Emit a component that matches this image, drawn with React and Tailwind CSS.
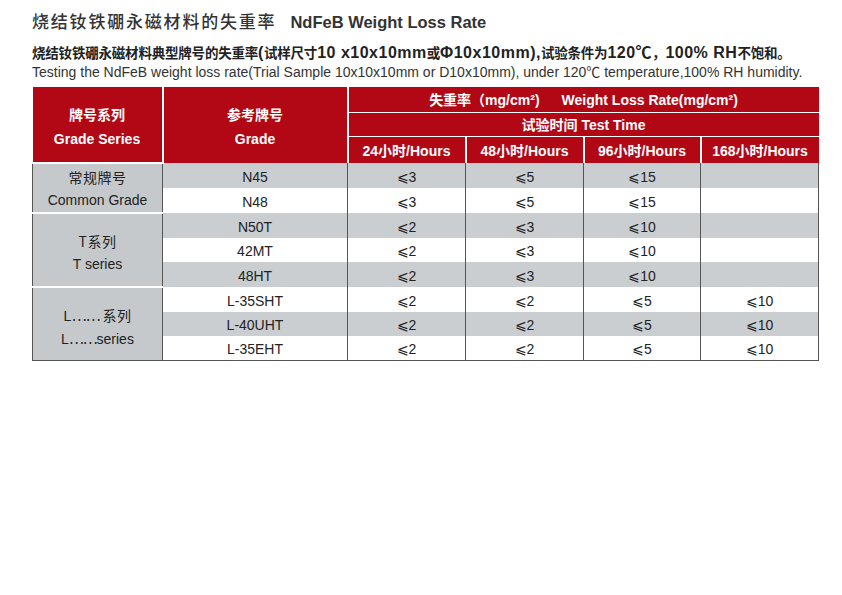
import React from "react";

const FONT = { fontFamily: '"Liberation Sans", Arial, "Noto Sans CJK SC", sans-serif' };
const CJK = { fontFamily: '"Noto Sans CJK SC", sans-serif' };

const rows = [
  { g: "N45", v: ["⩽3", "⩽5", "⩽15", ""], gray: true, h: "h-[25px]" },
  { g: "N48", v: ["⩽3", "⩽5", "⩽15", ""], gray: false, h: "h-[25px]" },
  { g: "N50T", v: ["⩽2", "⩽3", "⩽10", ""], gray: true, h: "h-[25px]" },
  { g: "42MT", v: ["⩽2", "⩽3", "⩽10", ""], gray: false, h: "h-[24px]" },
  { g: "48HT", v: ["⩽2", "⩽3", "⩽10", ""], gray: true, h: "h-[25px]" },
  { g: "L-35SHT", v: ["⩽2", "⩽2", "⩽5", "⩽10"], gray: false, h: "h-[25px]" },
  { g: "L-40UHT", v: ["⩽2", "⩽2", "⩽5", "⩽10"], gray: true, h: "h-[24px]" },
  { g: "L-35EHT", v: ["⩽2", "⩽2", "⩽5", "⩽10"], gray: false, h: "h-[24px]" },
];

const series = {
  0: { span: 2, zh: "常规牌号", en: "Common Grade", pad: "pt-0" },
  2: { span: 3, zh: "T系列", en: "T series", pad: "pt-[4px]" },
  5: { span: 3, zh: "系列", en: "series", dots: true, pad: "pt-[6px]" },
};

// Line 2 split into CJK and Latin runs so each can have its own size
const line2 = [
  ["z", "烧结钕铁硼永磁材料典型牌号的失重率"],
  ["l", "("],
  ["z", "试样尺寸"],
  ["l", "10 x10x10mm"],
  ["z", "或"],
  ["l", "Φ10x10mm),"],
  ["z", "试验条件为"],
  ["l", "120℃"],
  ["z", "，"],
  ["l", "100% RH"],
  ["z", "不饱和。"],
];

export default function App() {
  return (
    <div className="w-[842px] h-[595px] bg-white text-[#2a2a2a]" style={FONT}>
      <div className="pl-[32px] pt-[10px]">
        <h1 className="h-[24px] text-[17px] leading-[24px] font-medium text-[#333]">
          <span className="tracking-[1.8px]">烧结钕铁硼永磁材料的失重率</span>
          <span className="ml-[14px] font-bold text-[16.5px]">NdFeB Weight Loss Rate</span>
        </h1>
        <p className="mt-[8px] h-[20px] leading-[20px] font-bold text-[#222] whitespace-nowrap">
          {line2.map(([k, t], i) =>
            k === "z" ? (
              <span key={i} className="text-[13.5px] tracking-[-0.2px]" style={CJK}>{t}</span>
            ) : (
              <span key={i} className="text-[16px] tracking-[0.5px]">{t}</span>
            )
          )}
        </p>
        <p className="mt-[1px] h-[18px] text-[14px] leading-[18px] text-[#333]">
          Testing the NdFeB weight loss rate(Trial Sample 10x10x10mm or D10x10mm), under 120℃ temperature,100% RH humidity.
        </p>
      </div>
      <table className="ml-[32px] mt-[6px] table-fixed border-collapse w-[786px] text-center">
        <colgroup>
          <col className="w-[130px]" />
          <col className="w-[185px]" />
          <col className="w-[118px]" />
          <col className="w-[118px]" />
          <col className="w-[117px]" />
          <col className="w-[118px]" />
        </colgroup>
        <thead className="bg-[#b20816] text-white font-bold text-[14px]">
          <tr className="h-[25px]">
            <th rowSpan={3} className="border-r-2 border-white leading-[24px] font-bold pt-[4px]">
              牌号系列<br />Grade Series
            </th>
            <th rowSpan={3} className="border-r-2 border-white leading-[24px] font-bold pt-[4px]">
              参考牌号<br />Grade
            </th>
            <th colSpan={4} className="border-b border-white font-bold pt-[2px] leading-[20px]">
              <span>失重率（mg/cm²)</span>
              <span className="ml-[22px]">Weight Loss Rate(mg/cm²)</span>
            </th>
          </tr>
          <tr className="h-[24px]">
            <th colSpan={4} className="border-b border-white font-bold pt-[2px] leading-[20px]">试验时间 Test Time</th>
          </tr>
          <tr className="h-[27px]">
            <th className="border-r-2 border-white font-bold pt-[2px] leading-[20px]">24小时/Hours</th>
            <th className="border-r-2 border-white font-bold pt-[2px] leading-[20px]">48小时/Hours</th>
            <th className="border-r-2 border-white font-bold pt-[2px] leading-[20px]">96小时/Hours</th>
            <th className="font-bold pt-[2px] leading-[20px]">168小时/Hours</th>
          </tr>
        </thead>
        <tbody className="text-[14px] text-[#222] border-x border-b border-[#555]">
          {rows.map((r, i) => (
            <tr key={i} className={`${r.h} ${r.gray ? "bg-[#cbced1]" : "bg-white"}`}>
              {series[i] && (
                <td
                  rowSpan={series[i].span}
                  className={`bg-[#c6c9cb] border-r border-[#555] border-t-2 border-t-white leading-[22px] ${series[i].pad}`}
                >
                  <div className="text-[14px] tracking-[0.5px]">
                    {series[i].dots && (
                      <>
                        L<span style={CJK} className="tracking-[-1px]">……</span>
                        <span className="ml-[3px]"></span>
                      </>
                    )}
                    <span style={CJK}>{series[i].zh}</span>
                  </div>
                  <div>
                    {series[i].dots && (
                      <>
                        L<span style={CJK} className="tracking-[-1px]">……</span>
                      </>
                    )}
                    {series[i].en}
                  </div>
                </td>
              )}
              <td className="border-r border-[#555] p-0 pt-[2px] leading-[18px]">{r.g}</td>
              {r.v.map((v, j) => (
                <td key={j} className={`p-0 pt-[2px] leading-[18px] ${j < 3 ? "border-r border-[#555]" : ""}`}>{v}</td>
              ))}
            </tr>
          ))}
        </tbody>
      </table>
    </div>
  );
}
